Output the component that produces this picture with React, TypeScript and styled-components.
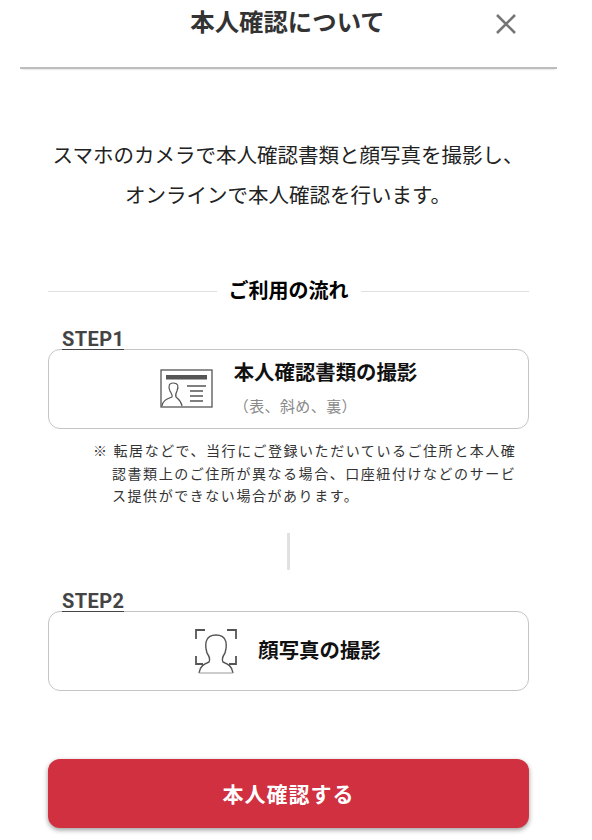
import React from 'react'
import styled, { createGlobalStyle } from 'styled-components'

const GlobalStyle = createGlobalStyle`
    html, body {
        margin: 0;
        padding: 0;
        background: #fff;
    }
    body {
        font-family: "Roboto", "Noto Sans CJK JP", sans-serif;
        color: #1f1f1f;
    }
`

const Page = styled.div`
    width: 592px;
    height: 840px;
    overflow: hidden;
    display: flex;
    flex-direction: column;
`

const Header = styled.header`
    margin: 0 35px 0 20px;
    height: 69px;
    box-sizing: border-box;
    border-bottom: 2px solid #bdbdbd;
    box-shadow: 0 2px 2px -2px rgba(0, 0, 0, 0.25);
    position: relative;
    display: flex;
    justify-content: center;
    padding-top: 7px;
`

const Title = styled.h1`
    margin: 0 0 0 -2px;
    font-size: 24.4px;
    line-height: 32px;
    font-weight: 700;
    color: #333;
`

const CloseButton = styled.button`
    position: absolute;
    right: 38px;
    top: 11px;
    width: 26px;
    height: 26px;
    padding: 0;
    border: none;
    background: none;
    display: flex;
`

const Intro = styled.p`
    margin: 67px 16px 0 0;
    text-align: center;
    font-size: 20.5px;
    line-height: 40px;
    color: #222;
`

const Content = styled.div`
    padding: 0 63px 0 48px;
    display: flex;
    flex-direction: column;
`

const FlowHeading = styled.div`
    margin-top: 62px;
    display: flex;
    align-items: center;
    gap: 12px;
    font-size: 20px;
    line-height: 26px;
    font-weight: 700;
    color: #000;
    &::before, &::after {
        content: "";
        flex: 1;
        height: 1px;
        background: #e0e0e0;
    }
`

const StepLabel = styled.div<{ $top: number }>`
    position: relative;
    z-index: 1;
    margin: ${p => p.$top}px 0 -1px 14px;
    height: 20px;
    font-size: 20px;
    line-height: 20px;
    letter-spacing: 0.4px;
    font-weight: 700;
    color: #444;
    width: fit-content;
    border-bottom: 1px solid #444;
`

const StepCard = styled.div`
    box-sizing: border-box;
    height: 80px;
    border: 1.5px solid #c4c4c4;
    border-radius: 12px;
    background: #fff;
    display: flex;
    align-items: center;
    justify-content: center;
`

const CardIconSlot = styled.div<{ $shift: number }>`
    display: flex;
    margin-left: ${p => p.$shift}px;
`

const CardText = styled.div`
    display: flex;
    flex-direction: column;
    margin-left: 20px;
`

const CardTitle = styled.div`
    font-size: 20.4px;
    line-height: 28px;
    font-weight: 700;
    color: #111;
`

const CardSub = styled.div`
    margin: 8px 0 0 0;
    font-size: 15px;
    line-height: 24px;
    letter-spacing: 0.4px;
    color: #8a8a8a;
`

const Note = styled.div`
    margin: 11px 0 0 46px;
    padding-left: 18px;
    text-indent: -19px;
    width: 410px;
    font-size: 14px;
    line-height: 22.5px;
    letter-spacing: 1.55px;
    color: #333;
`

const Connector = styled.div`
    margin: 25px auto 0 auto;
    width: 3px;
    height: 37px;
    background: #e2e0e0;
`

const ConfirmButton = styled.button`
    margin-top: 68px;
    height: 69px;
    padding: 0;
    border: none;
    border-radius: 12px;
    background: #d03040;
    color: #fff;
    font-family: inherit;
    font-size: 21px;
    font-weight: 700;
    letter-spacing: 1px;
    box-shadow: 0 2px 5px rgba(0, 0, 0, 0.4);
`

function CloseIcon() {
    return <svg width="26" height="26" viewBox="0 0 26 26">
        <path d="M4 4L22 22M22 4L4 22" stroke="#757575" strokeWidth="2.6" fill="none" />
    </svg>
}

function IdCardIcon() {
    return <svg width="54" height="40" viewBox="0 0 54 40">
        <rect x="1" y="1" width="51" height="37" fill="#fff" stroke="#555" strokeWidth="1.3" />
        <rect x="6" y="6" width="41" height="4.5" fill="#555" />
        <path d="M2 37C3 31 7 30 12 28C13 26 11 24 10 22C8 17 9 14 13 14C18 14 19 17 17 22C16 24 15 26 16 28C18 30 21 31 22 37" fill="none" stroke="#555" strokeWidth="1.2" />
        <path d="M27 17H46M30 22H43M30 27H43M30 32H43" stroke="#555" strokeWidth="1.4" fill="none" />
    </svg>
}

function FaceIcon() {
    return <svg width="44" height="46" viewBox="0 0 44 46">
        <path d="M2 11V2H11M33 2H42V11M2 28V36H9M42 28V36H35" fill="none" stroke="#555" strokeWidth="1.8" />
        <path d="M5 45C6 38 10 36 15 34C17 31 15 28 13 25C11 18 10 7 22 7C34 7 33 18 31 25C29 28 27 31 29 34C34 36 38 38 39 45" fill="none" stroke="#555" strokeWidth="1.4" />
        <path d="M5 45H39" fill="none" stroke="#999" strokeWidth="1" />
    </svg>
}

export default function App(): React.ReactElement {
    return <>
        <GlobalStyle />
        <Page>
            <Header>
                <Title>本人確認について</Title>
                <CloseButton aria-label="閉じる"><CloseIcon /></CloseButton>
            </Header>
            <Intro>
                スマホのカメラで本人確認書類と顔写真を撮影し、<br />
                オンラインで本人確認を行います。
            </Intro>
            <Content>
                <FlowHeading>ご利用の流れ</FlowHeading>
                <StepLabel $top={25}>STEP1</StepLabel>
                <StepCard>
                    <CardIconSlot $shift={0}><IdCardIcon /></CardIconSlot>
                    <CardText>
                        <CardTitle>本人確認書類の撮影</CardTitle>
                        <CardSub>（表、斜め、裏）</CardSub>
                    </CardText>
                </StepCard>
                <Note>※ 転居などで、当行にご登録いただいているご住所と本人確認書類上のご住所が異なる場合、口座紐付けなどのサービス提供ができない場合があります。</Note>
                <Connector />
                <StepLabel $top={21}>STEP2</StepLabel>
                <StepCard>
                    <CardIconSlot $shift={-2}><FaceIcon /></CardIconSlot>
                    <CardText>
                        <CardTitle>顔写真の撮影</CardTitle>
                    </CardText>
                </StepCard>
                <ConfirmButton>本人確認する</ConfirmButton>
            </Content>
        </Page>
    </>
}
